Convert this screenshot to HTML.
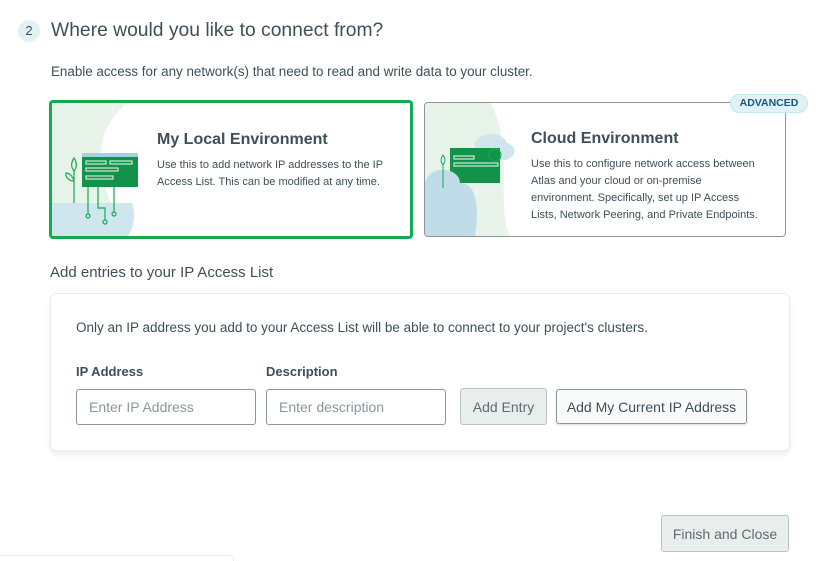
<!DOCTYPE html>
<html><head><style>
*{box-sizing:border-box;margin:0;padding:0}
body{width:822px;height:561px;background:#fff;font-family:"Liberation Sans",sans-serif;color:#3d4f58;position:relative;overflow:hidden}
.a{position:absolute}
.btn{position:absolute;border-radius:3px;font-size:14px;display:flex;align-items:center;justify-content:center;color:#5d6c74}
input{position:absolute;border:1px solid #89979b;border-radius:3px;font-family:inherit;font-size:14px;padding-left:12px;color:#3d4f58;background:#fff}
input::placeholder{color:#89979b}
</style></head><body>
<div class="a" style="left:18px;top:20px;width:22px;height:22px;border-radius:50%;background:#e1f2f6;font-size:13px;text-align:center;line-height:22px;color:#3d4f58">2</div>
<div class="a" style="left:51px;top:20px;font-size:19.3px;color:#3d4f58">Where would you like to connect from?</div>
<div class="a" style="left:51px;top:64px;font-size:13.4px">Enable access for any network(s) that need to read and write data to your cluster.</div>

<div class="a" style="left:49px;top:100px;width:364px;height:139px;border:3px solid #13aa52;border-radius:4px;overflow:hidden">
<svg class="a" style="left:0;top:0" width="90" height="136"><path d="M0 0H75C40 30 40 70 75 136H0Z" fill="#e8f3ea"/><path d="M0 100H80C85 115 80 130 73 136H0Z" fill="#cfe6ef"/>
<rect x="30" y="50" width="56" height="34" fill="#13924a"/><rect x="30" y="50" width="56" height="4" fill="#9fd3e0"/>
<g stroke="#cfe9d5" fill="none" stroke-width="1.2"><rect x="34" y="58" width="20" height="3"/><rect x="58" y="58" width="22" height="3"/><rect x="34" y="65" width="32" height="3"/><rect x="34" y="73" width="27" height="3"/></g>
<g stroke="#13aa52" fill="none" stroke-width="1.2"><path d="M36 84V111M46 84V105H53V117M62 84V109"/><circle cx="36" cy="113" r="2"/><circle cx="53" cy="119" r="2"/><circle cx="62" cy="111" r="2"/><path d="M22 100V68M22 68C18 63 20 58 22 55C24 58 26 63 22 68M22 78C16 78 13 73 14 70C18 70 21 74 22 78"/></g></svg>
<div class="a" style="left:105px;top:28px;font-size:16px;font-weight:bold;color:#3d4f58">My Local Environment</div>
<div class="a" style="left:105px;top:54px;font-size:11px;line-height:17px;color:#3d4f58;width:250px">Use this to add network IP addresses to the IP Access List. This can be modified at any time.</div>
</div>

<div class="a" style="left:424px;top:102px;width:362px;height:135px;border:1px solid #89979b;border-radius:4px;overflow:hidden">
<svg class="a" style="left:0;top:0" width="100" height="134"><path d="M0 0H65C90 40 70 100 85 134H0Z" fill="#e8f3ea"/>
<path d="M50 40C55 28 78 28 82 40C92 42 92 55 80 57H50Z" fill="#cfe6ef"/>
<rect x="25" y="45" width="50" height="35" fill="#13924a"/>
<g stroke="#cfe9d5" fill="none" stroke-width="1.2"><rect x="29" y="53" width="20" height="3"/><rect x="29" y="60" width="44" height="3"/></g>
<circle cx="70" cy="52" r="6" fill="none" stroke="#13aa52" stroke-width="1.2"/>
<path d="M0 80C5 60 35 65 35 80C50 80 55 100 50 134H0Z" fill="#bfdce8"/>
<path d="M18 85V62M18 62C15 58 16 55 18 52C20 55 21 58 18 62" stroke="#13aa52" fill="none"/></svg>
<div class="a" style="left:106px;top:27px;font-size:16px;font-weight:bold">Cloud Environment</div>
<div class="a" style="left:106px;top:53px;font-size:11px;line-height:17px;width:232px">Use this to configure network access between Atlas and your cloud or on-premise environment. Specifically, set up IP Access Lists, Network Peering, and Private Endpoints.</div>
</div>
<div class="a" style="left:730px;top:94px;width:78px;height:19px;border-radius:10px;background:#e1f2f6;border:1px solid #c3e7f0;font-size:10.5px;font-weight:bold;text-align:center;line-height:17px;color:#1a567e">ADVANCED</div>

<div class="a" style="left:50px;top:264px;font-size:15px">Add entries to your IP Access List</div>
<div class="a" style="left:50px;top:293px;width:740px;height:158px;border:1px solid #e7eeec;border-radius:6px;box-shadow:0 3px 6px rgba(0,0,0,0.08)"></div>
<div class="a" style="left:76px;top:320px;font-size:13.5px">Only an IP address you add to your Access List will be able to connect to your project's clusters.</div>
<div class="a" style="left:76px;top:364px;font-size:13px;font-weight:bold">IP Address</div>
<div class="a" style="left:266px;top:364px;font-size:13px;font-weight:bold">Description</div>
<input style="left:76px;top:389px;width:180px;height:36px" placeholder="Enter IP Address">
<input style="left:266px;top:389px;width:180px;height:36px" placeholder="Enter description">
<div class="btn" style="left:460px;top:388px;width:87px;height:37px;background:#e7eeec;border:1px solid #b8c4c2">Add Entry</div>
<div class="btn" style="left:556px;top:389px;width:191px;height:35px;background:#f9fbfa;border:1px solid #89979b;box-shadow:0 1px 2px rgba(0,0,0,0.15);color:#3d4f58">Add My Current IP Address</div>
<div class="btn" style="left:661px;top:515px;width:128px;height:37px;background:#e7eeec;border:1px solid #b8c4c2">Finish and Close</div>
<div class="a" style="left:0;top:555px;width:234px;height:6px;border-top:1px solid #e1f2f6;border-right:1px solid #e1f2f6;border-radius:0 4px 0 0"></div>
</body></html>
